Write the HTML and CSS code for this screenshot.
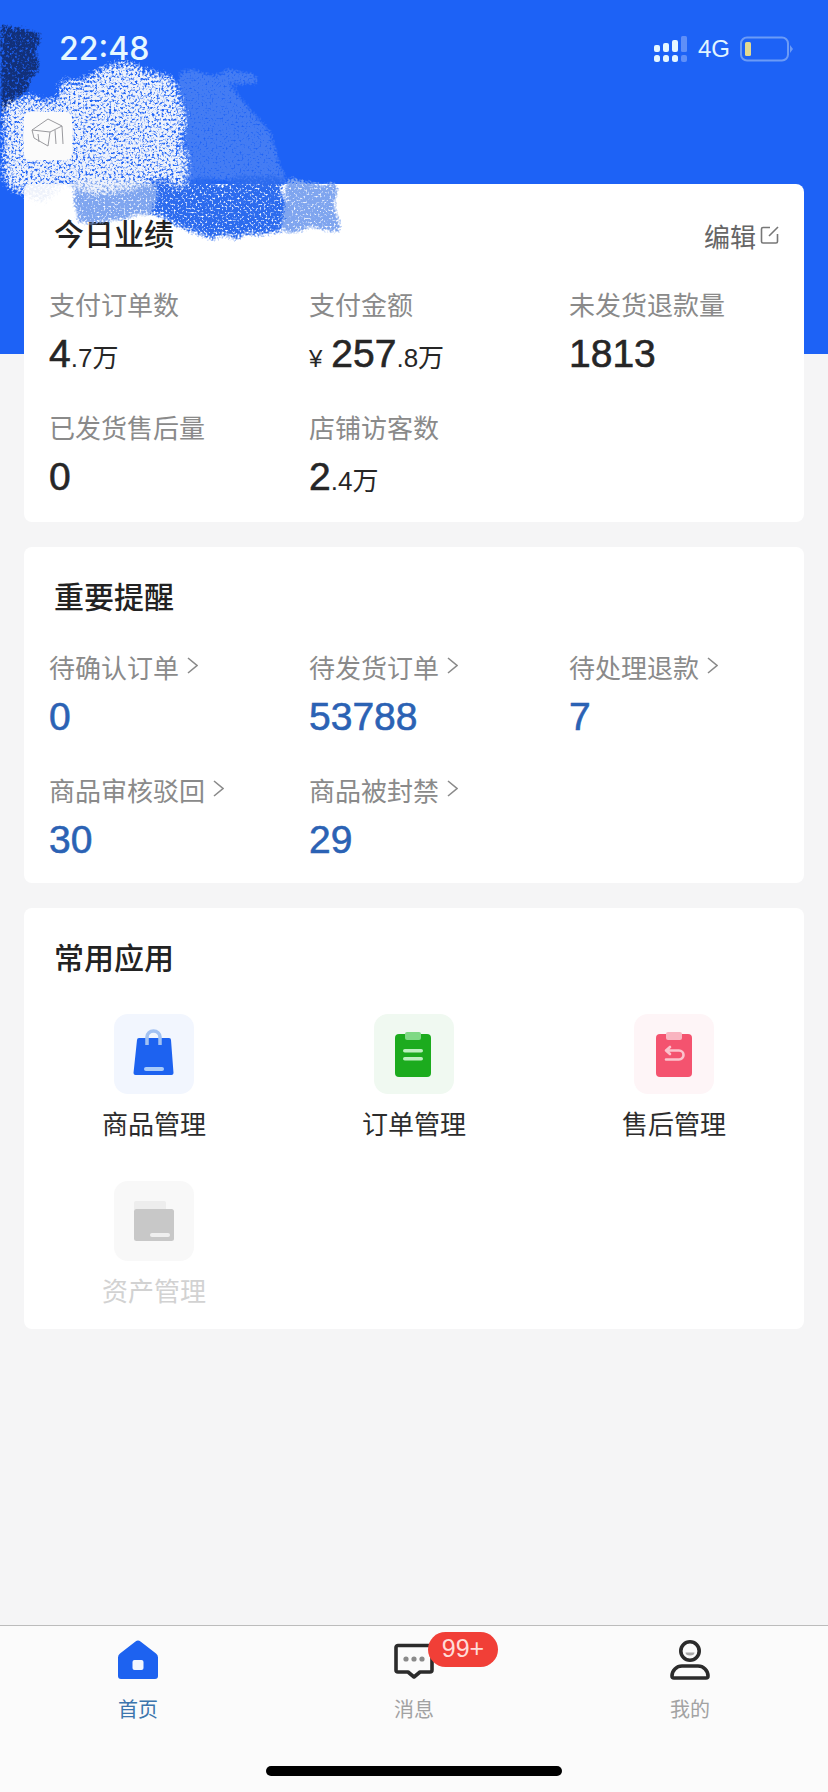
FILE: index.html
```html
<!DOCTYPE html>
<html lang="zh-CN">
<head>
  <meta charset="UTF-8" />
  <meta name="viewport" content="width=device-width, initial-scale=1" />
  <title>工作台</title>
  <link rel="stylesheet" href="styles.css">
</head>
<body>
  <div class="page">
    <!-- painted smear across the top left corner -->
    <svg class="smear" width="350" height="260" viewBox="0 0 350 260">
      <defs>
        <filter id="dustWhite" filterUnits="userSpaceOnUse" x="0" y="0" width="350" height="260" color-interpolation-filters="sRGB">
          <feTurbulence type="fractalNoise" baseFrequency="0.035" numOctaves="2" seed="4" result="wave" />
          <feDisplacementMap in="SourceAlpha" in2="wave" scale="34" result="shape" />
          <feGaussianBlur in="shape" stdDeviation="7" result="b" />
          <feTurbulence type="fractalNoise" baseFrequency="0.42" numOctaves="4" seed="11" result="n" />
          <feColorMatrix in="n" type="matrix" values="0 0 0 0 0  0 0 0 0 0  0 0 0 0 0  1 0 0 0 0" result="na" />
          <feComposite in="b" in2="na" operator="arithmetic" k1="4" k4="-1.05" result="m" />
          <feFlood flood-color="#eef2fb" />
          <feComposite in2="m" operator="in" />
        </filter>
        <filter id="dustBlue" filterUnits="userSpaceOnUse" x="0" y="0" width="350" height="260" color-interpolation-filters="sRGB">
          <feTurbulence type="fractalNoise" baseFrequency="0.035" numOctaves="2" seed="9" result="wave" />
          <feDisplacementMap in="SourceAlpha" in2="wave" scale="26" result="shape" />
          <feGaussianBlur in="shape" stdDeviation="4" result="b" />
          <feTurbulence type="fractalNoise" baseFrequency="0.5" numOctaves="4" seed="21" result="n" />
          <feColorMatrix in="n" type="matrix" values="0 0 0 0 0  0 0 0 0 0  0 0 0 0 0  1 0 0 0 0" result="na" />
          <feComposite in="b" in2="na" operator="arithmetic" k1="4" k4="-0.9" result="m" />
          <feFlood flood-color="#2c6bee" />
          <feComposite in2="m" operator="in" />
        </filter>
        <filter id="dustPale" filterUnits="userSpaceOnUse" x="0" y="0" width="350" height="260" color-interpolation-filters="sRGB">
          <feTurbulence type="fractalNoise" baseFrequency="0.04" numOctaves="2" seed="5" result="wave" />
          <feDisplacementMap in="SourceAlpha" in2="wave" scale="18" result="shape" />
          <feGaussianBlur in="shape" stdDeviation="3" result="b" />
          <feTurbulence type="fractalNoise" baseFrequency="0.5" numOctaves="4" seed="31" result="n" />
          <feColorMatrix in="n" type="matrix" values="0 0 0 0 0  0 0 0 0 0  0 0 0 0 0  1 0 0 0 0" result="na" />
          <feComposite in="b" in2="na" operator="arithmetic" k1="4" k4="-0.85" result="m" />
          <feFlood flood-color="#7fa5ef" />
          <feComposite in2="m" operator="in" />
        </filter>
        <filter id="dustNavy" filterUnits="userSpaceOnUse" x="0" y="0" width="350" height="260" color-interpolation-filters="sRGB">
          <feTurbulence type="fractalNoise" baseFrequency="0.05" numOctaves="2" seed="2" result="wave" />
          <feDisplacementMap in="SourceAlpha" in2="wave" scale="20" result="shape" />
          <feGaussianBlur in="shape" stdDeviation="3" result="b" />
          <feTurbulence type="fractalNoise" baseFrequency="0.4" numOctaves="4" seed="17" result="n" />
          <feColorMatrix in="n" type="matrix" values="0 0 0 0 0  0 0 0 0 0  0 0 0 0 0  1 0 0 0 0" result="na" />
          <feComposite in="b" in2="na" operator="arithmetic" k1="4" k4="-0.9" result="m" />
          <feFlood flood-color="#123079" />
          <feComposite in2="m" operator="in" />
        </filter>
      </defs>
      <path filter="url(#dustNavy)" d="M0 22 L30 28 L48 38 L30 48 L42 62 L30 90 L10 100 L6 130 L-10 130 L-10 22 Z" />
      <path filter="url(#dustPale)" opacity="0.4" d="M180 70 L255 72 L255 80 L230 84 L270 130 L290 184 L180 184 Z" />
      <path filter="url(#dustBlue)" d="M150 178 L290 178 L285 238 L240 236 L215 244 L165 222 L145 215 Z" />
      <path filter="url(#dustPale)" d="M70 178 L155 178 L150 218 L75 226 Z" />
      <path filter="url(#dustPale)" d="M285 180 L336 182 L340 232 L282 232 Z" />
      <path filter="url(#dustWhite)" d="M-10 108 L45 92 L80 72 L120 62 L178 76 L186 130 L184 186 L78 196 L20 200 L-10 176 Z" />
    </svg>

    <header class="top">
      <div class="status">
        <span class="clock">22:48</span>
        <div class="status-right">
          <svg width="34" height="26" viewBox="0 0 34 26">
            <g fill="#e6f7ff">
              <rect x="0" y="9" width="6" height="7" rx="2" />
              <rect x="9" y="7" width="6" height="9" rx="2" />
              <rect x="18" y="4" width="6" height="12" rx="2" />
              <rect x="0" y="19" width="6" height="7" rx="2.5" />
              <rect x="9" y="19" width="6" height="7" rx="2.5" />
              <rect x="18" y="19" width="6" height="7" rx="2.5" />
            </g>
            <g fill="#5f8ff8">
              <rect x="27" y="0" width="6" height="16" rx="1.5" />
              <rect x="27" y="19" width="6" height="7" rx="2" />
            </g>
          </svg>
          <span class="net">4G</span>
          <svg width="54" height="26" viewBox="0 0 54 26">
            <rect x="1" y="1.5" width="47" height="23" rx="6" fill="none" stroke="#6c9bf6" stroke-width="2" />
            <rect x="5" y="6" width="6" height="14" rx="1.5" fill="#e3d990" />
            <path d="M50 9 L53 13 L50 17 Z" fill="#6c9bf6" />
          </svg>
        </div>
      </div>
      <div class="shop-logo">
        <svg width="48" height="48" viewBox="0 0 48 48" fill="none" stroke="#9a9a9e" stroke-width="1">
          <path d="M8 18 L24 7 L38 14 L39 32 M8 18 L10 26 L24 34 L26 20 L8 18 M26 20 L38 14 M14 22 L15 30 M31 18 L32 32" />
        </svg>
      </div>
    </header>

    <main class="content">
      <section class="card card-today">
        <div class="card-head">
          <h2 class="card-title">今日业绩</h2>
          <span class="edit">编辑
            <svg width="20" height="20" viewBox="0 0 20 20" fill="none" stroke="#777" stroke-width="1.6">
              <path d="M10 2.5 H3 A1.5 1.5 0 0 0 1.5 4 V16.5 A1.5 1.5 0 0 0 3 18 H16 A1.5 1.5 0 0 0 17.5 16.5 V9" />
              <path d="M9 11 L18 2" />
            </svg>
          </span>
        </div>
        <div class="stat-grid">
          <div class="stat">
            <div class="stat-label">支付订单数</div>
            <div class="stat-value">4<small>.7万</small></div>
          </div>
          <div class="stat">
            <div class="stat-label">支付金额</div>
            <div class="stat-value"><small class="yen">¥</small>257<small>.8万</small></div>
          </div>
          <div class="stat">
            <div class="stat-label">未发货退款量</div>
            <div class="stat-value">1813</div>
          </div>
          <div class="stat">
            <div class="stat-label">已发货售后量</div>
            <div class="stat-value">0</div>
          </div>
          <div class="stat">
            <div class="stat-label">店铺访客数</div>
            <div class="stat-value">2<small>.4万</small></div>
          </div>
        </div>
      </section>

      <section class="card card-remind">
        <div class="card-head">
          <h2 class="card-title">重要提醒</h2>
        </div>
        <div class="stat-grid">
          <div class="stat">
            <div class="stat-label">待确认订单 <svg class="chev" width="11" height="17" viewBox="0 0 11 17"><path d="M1 1 L10 8.5 L1 16" /></svg></div>
            <div class="stat-value blue">0</div>
          </div>
          <div class="stat">
            <div class="stat-label">待发货订单 <svg class="chev" width="11" height="17" viewBox="0 0 11 17"><path d="M1 1 L10 8.5 L1 16" /></svg></div>
            <div class="stat-value blue">53788</div>
          </div>
          <div class="stat">
            <div class="stat-label">待处理退款 <svg class="chev" width="11" height="17" viewBox="0 0 11 17"><path d="M1 1 L10 8.5 L1 16" /></svg></div>
            <div class="stat-value blue">7</div>
          </div>
          <div class="stat">
            <div class="stat-label">商品审核驳回 <svg class="chev" width="11" height="17" viewBox="0 0 11 17"><path d="M1 1 L10 8.5 L1 16" /></svg></div>
            <div class="stat-value blue">30</div>
          </div>
          <div class="stat">
            <div class="stat-label">商品被封禁 <svg class="chev" width="11" height="17" viewBox="0 0 11 17"><path d="M1 1 L10 8.5 L1 16" /></svg></div>
            <div class="stat-value blue">29</div>
          </div>
        </div>
      </section>

      <section class="card card-apps">
        <div class="card-head">
          <h2 class="card-title">常用应用</h2>
        </div>
        <div class="app-grid">
          <div class="app">
            <div class="app-tile tile-blue">
              <svg width="80" height="80" viewBox="0 0 80 80">
                <path d="M25 24 H55 A2 2 0 0 1 57 26 L59.5 59 A2 2 0 0 1 57.5 61 H21.5 A2 2 0 0 1 19.5 59 L23 26 A2 2 0 0 1 25 24 Z" fill="#1d62f0" />
                <path d="M33 31 V23 A6.5 6 0 0 1 46 23 V31" fill="none" stroke="#a3c2f2" stroke-width="3.5" />
                <rect x="30" y="53" width="20" height="4" rx="2" fill="#a9cbf9" />
              </svg>
            </div>
            <span>商品管理</span>
          </div>
          <div class="app">
            <div class="app-tile tile-green">
              <svg width="80" height="80" viewBox="0 0 80 80">
                <rect x="21" y="20" width="36" height="43" rx="4" fill="#1cab1e" />
                <rect x="31" y="18" width="16" height="8" rx="2" fill="#7fd985" />
                <rect x="29" y="35" width="20" height="3.5" rx="1.75" fill="#bdf0bf" />
                <rect x="29" y="43" width="20" height="3.5" rx="1.75" fill="#bdf0bf" />
              </svg>
            </div>
            <span>订单管理</span>
          </div>
          <div class="app">
            <div class="app-tile tile-red">
              <svg width="80" height="80" viewBox="0 0 80 80">
                <rect x="22" y="20" width="36" height="43" rx="4" fill="#f4536f" />
                <rect x="32" y="18" width="16" height="8" rx="2" fill="#f9b4c0" />
                <path d="M36 33 L32 36.5 L36 40 M32 36.5 H45 A4.5 4.5 0 0 1 45 45.5 H32" fill="none" stroke="#fbc3cd" stroke-width="2.6" stroke-linecap="round" stroke-linejoin="round" />
              </svg>
            </div>
            <span>售后管理</span>
          </div>
          <div class="app app-off">
            <div class="app-tile tile-grey">
              <svg width="80" height="80" viewBox="0 0 80 80">
                <path d="M20 22 A2 2 0 0 1 22 20 H50 A2 2 0 0 1 52 22 V29 H20 Z" fill="#ededed" />
                <rect x="20" y="28" width="40" height="32" rx="2.5" fill="#c8c8c8" />
                <rect x="36" y="52" width="20" height="4" rx="2" fill="#efefef" />
              </svg>
            </div>
            <span>资产管理</span>
          </div>
        </div>
      </section>
    </main>

    <nav class="tabbar">
      <div class="tabs">
        <div class="tab tab-on">
          <svg width="40" height="40" viewBox="0 0 40 40">
            <path d="M17.5 1.5 A4 4 0 0 1 22.5 1.5 L38 13.5 A5 5 0 0 1 40 17.5 V36 A3 3 0 0 1 37 39 H3 A3 3 0 0 1 0 36 V17.5 A5 5 0 0 1 2 13.5 Z" fill="#1d62f0" />
            <rect x="14.5" y="20" width="11" height="10" rx="2" fill="#f2f6fe" />
          </svg>
          <span>首页</span>
        </div>
        <div class="tab">
          <div class="tab-icon">
            <svg width="40" height="40" viewBox="0 0 40 40">
              <path d="M4 5.5 H36 A2 2 0 0 1 38 7.5 V30 A2 2 0 0 1 36 32 H26 L20 37 L14 32 H4 A2 2 0 0 1 2 30 V7.5 A2 2 0 0 1 4 5.5 Z" fill="none" stroke="#2b2b2b" stroke-width="3.6" stroke-linejoin="round" />
              <circle cx="12" cy="19" r="2.6" fill="#8a8a8a" />
              <circle cx="20" cy="19" r="2.6" fill="#8a8a8a" />
              <circle cx="28" cy="19" r="2.6" fill="#8a8a8a" />
            </svg>
            <span class="badge">99+</span>
          </div>
          <span>消息</span>
        </div>
        <div class="tab">
          <svg width="40" height="40" viewBox="0 0 40 40">
            <circle cx="20" cy="11" r="9.2" fill="none" stroke="#2b2b2b" stroke-width="3.6" />
            <path d="M15.5 12.5 H24.5 A4.5 3 0 0 1 15.5 12.5 Z" fill="#a8a8a8" />
            <path d="M12 26 H28 A10 10 0 0 1 38 36 V36 A2 2 0 0 1 36 38 H4 A2 2 0 0 1 2 36 V36 A10 10 0 0 1 12 26 Z" fill="none" stroke="#2b2b2b" stroke-width="3.6" stroke-linejoin="round" />
          </svg>
          <span>我的</span>
        </div>
      </div>
      <div class="home-bar"></div>
    </nav>
  </div>
</body>
</html>
```

FILE: styles.css
```css
:root {
  --primary: #1d62f6;
  --bg: #f5f5f6;
  --text: #262626;
  --subtle: #8a8a8a;
  --link: #2b62b4;
}

* {
  box-sizing: border-box;
  margin: 0;
  padding: 0;
}

body {
  font-family: "Liberation Sans", "Noto Sans CJK SC", sans-serif;
  color: var(--text);
  background: var(--bg);
}

.page {
  position: relative;
  width: 828px;
  height: 1792px;
  overflow: hidden;
  display: flex;
  flex-direction: column;
  background: linear-gradient(var(--primary) 354px, var(--bg) 354px);
}

.smear {
  position: absolute;
  top: 0;
  left: 0;
  z-index: 1;
  pointer-events: none;
}

.top {
  height: 184px;
}

.status {
  height: 98px;
  padding: 30px 34px 0 59px;
  display: flex;
  justify-content: space-between;
  align-items: flex-start;
}

.clock {
  font-family: Inter, sans-serif;
  font-size: 32px;
  line-height: 38px;
  font-weight: 500;
  color: #e6f8ff;
}

.status-right {
  display: flex;
  align-items: center;
  gap: 10px;
  height: 38px;
}

.net {
  font-size: 24px;
  color: #e0f4ff;
}

.shop-logo {
  position: relative;
  z-index: 2;
  width: 48px;
  height: 48px;
  margin: 14px 0 0 24px;
  background: #fbfbfb;
  border-radius: 6px;
}

.content {
  display: flex;
  flex-direction: column;
  gap: 25px;
  padding: 0 24px;
}

.card {
  background: #fff;
  border-radius: 8px;
}

.card-today {
  height: 338px;
}

.card-remind {
  height: 336px;
}

.card-apps {
  height: 421px;
}

.card-head {
  display: flex;
  justify-content: space-between;
  align-items: center;
  height: 36px;
  padding: 0 24px 0 30px;
  transform: translateY(33px);
}

.card-title {
  position: relative;
  z-index: 2;
  font-size: 30px;
  font-weight: 500;
  line-height: 36px;
  color: #222;
}

.edit {
  display: flex;
  align-items: center;
  gap: 4px;
  font-size: 26px;
  color: #666;
}

.stat-grid {
  display: grid;
  grid-template-columns: repeat(3, 1fr);
  row-gap: 32px;
  padding-top: 65px;
}

.stat {
  padding-left: 25px;
}

.stat-label {
  display: flex;
  align-items: center;
  gap: 8px;
  height: 36px;
  font-size: 26px;
  color: var(--subtle);
  white-space: nowrap;
}

.chev {
  fill: none;
  stroke: #8a8a8a;
  stroke-width: 1.6;
  margin-bottom: 2px;
}

.stat-value {
  height: 44px;
  margin-top: 11px;
  font-size: 39px;
  line-height: 44px;
  -webkit-text-stroke: 0.6px currentColor;
  color: var(--text);
}

.stat-value small {
  font-size: 26px;
  -webkit-text-stroke: 0;
}

.stat-value .yen {
  margin-right: 9px;
  font-size: 24px;
}

.stat-value.blue {
  color: var(--link);
}

.app-grid {
  display: grid;
  grid-template-columns: repeat(3, 1fr);
  row-gap: 38px;
  padding-top: 70px;
}

.app {
  display: flex;
  flex-direction: column;
  align-items: center;
  font-size: 26px;
  line-height: 36px;
  color: #2c2c2c;
}

.app-tile {
  width: 80px;
  height: 80px;
  margin-bottom: 13px;
  border-radius: 14px;
}

.tile-blue { background: #f2f6fe; }
.tile-green { background: #f0f9f1; }
.tile-red { background: #fef5f7; }
.tile-grey { background: #f8f8f8; }

.app-off {
  color: #d2d2d2;
}

.tabbar {
  margin-top: auto;
  height: 167px;
  background: #fbfbfb;
  border-top: 1px solid #bcbcbc;
  display: flex;
  flex-direction: column;
  align-items: center;
}

.tabs {
  width: 100%;
  display: grid;
  grid-template-columns: repeat(3, 1fr);
  padding-top: 14px;
}

.tab {
  display: flex;
  flex-direction: column;
  align-items: center;
  gap: 16px;
  font-size: 20px;
  line-height: 28px;
  color: #a2a2a2;
}

.tab-on {
  color: #3c75ad;
}

.tab-icon {
  position: relative;
  width: 40px;
  height: 40px;
}

.badge {
  position: absolute;
  top: -8px;
  left: 34px;
  width: 70px;
  height: 35px;
  border-radius: 18px;
  background: #f13f37;
  color: #ffdcd8;
  font-size: 25px;
  line-height: 33px;
  text-align: center;
}

.home-bar {
  width: 296px;
  height: 10px;
  margin-top: 42px;
  border-radius: 5px;
  background: #000;
}
```
